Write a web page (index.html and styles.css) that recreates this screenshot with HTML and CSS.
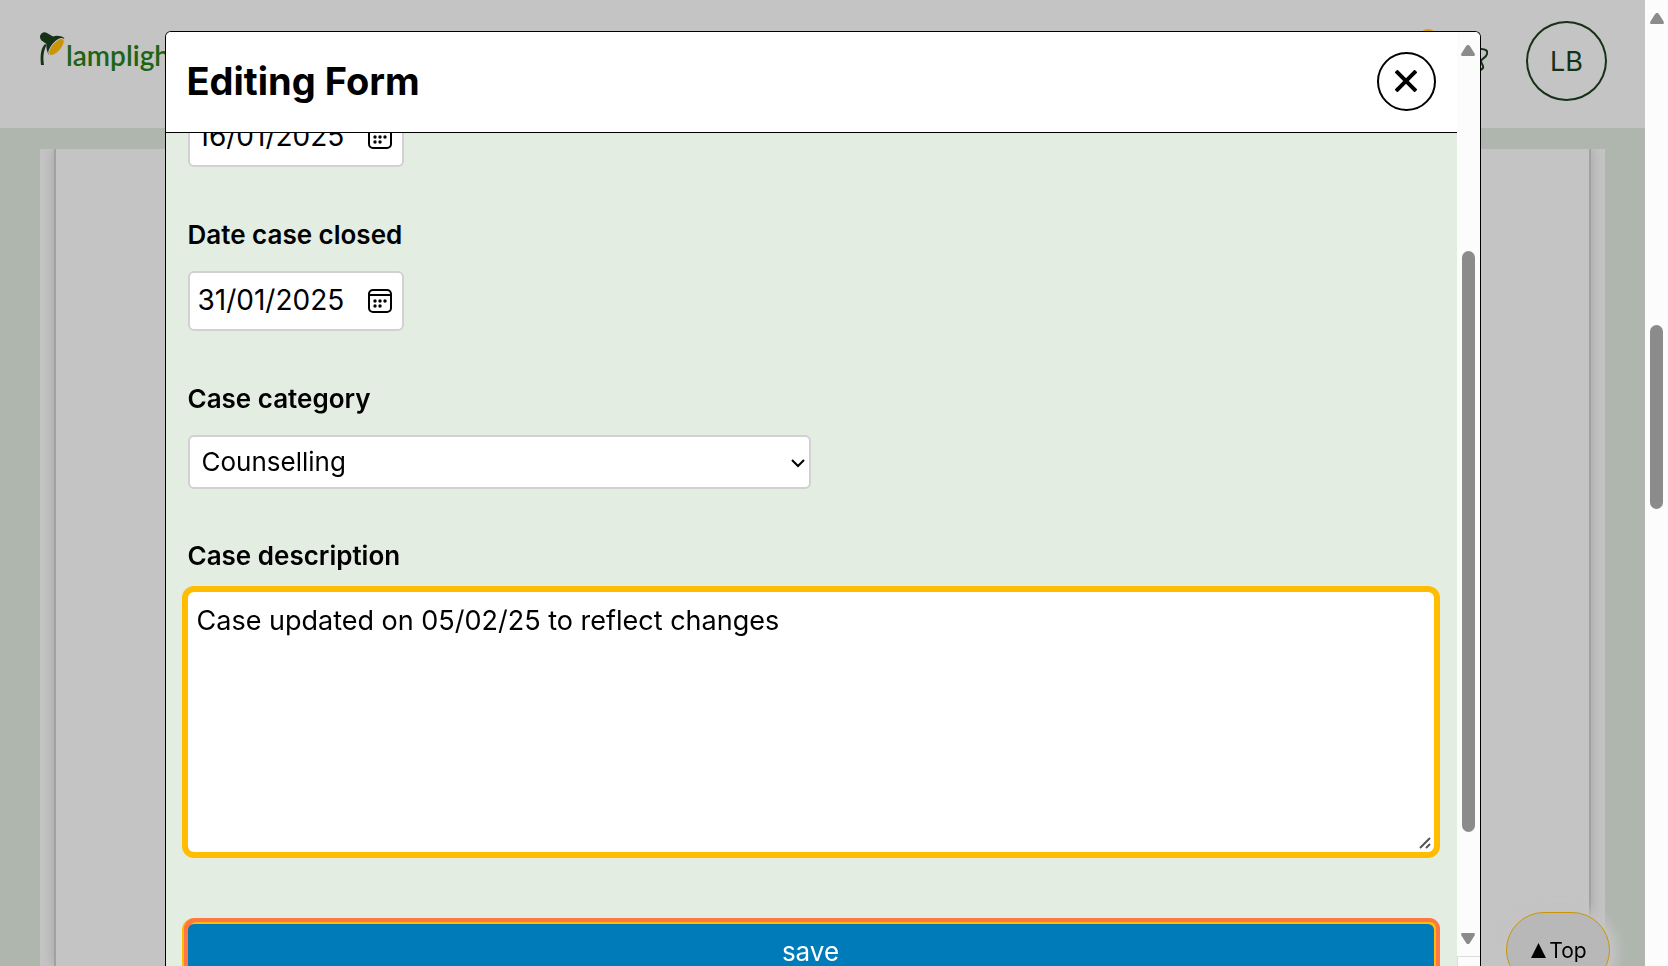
FILE: index.html
```html
<!DOCTYPE html>
<html lang="en-GB">
<head>
<meta charset="utf-8">
<title>Editing Form</title>
<link rel="stylesheet" href="styles.css">
</head>
<body>
<div class="page">
  <div class="site">
    <header class="site-header">
      <a class="logo" href="#">
        <svg class="logo-lamp" viewBox="0 0 25 34" aria-hidden="true">
          <path d="M1 33C0 23 1 16 5 12L6.500 13C3 20 3 26 4 33Z" fill="#163116"/>
          <path d="M0 4C1 1 4-1 7 1L13 4.500C17 3 21 4 24.500 6L9 23C7 20 6 16 6.500 12L1.500 8.500C0 7 0 5 0 4Z" fill="#163116"/>
          <ellipse cx="16.500" cy="15" rx="10.500" ry="4.600" transform="rotate(-49 16.500 15)" fill="#c99405" stroke="#c4c4c4"/>
        </svg>
        <span class="logo-name">lamplighter</span>
      </a>
      <nav class="site-tools">
        <button class="tool" type="button" aria-label="Notifications">
          <svg viewBox="0 0 28 28" aria-hidden="true"><path d="M5 21V12a9 9 0 0 1 18 0v9H3h22" /></svg>
          <span class="badge"></span>
        </button>
        <button class="tool" type="button" aria-label="Help">
          <svg viewBox="0 0 28 28" aria-hidden="true"><path d="M12 2h9c5 0 7 2 6 5-1 4-5 4-6 7 0 3 3 4 2 7-1 2-3 2-5 2"/></svg>
        </button>
        <button class="avatar" type="button">LB</button>
      </nav>
    </header>
    <main class="site-main">
      <div class="panel"><div class="panel-inner"></div></div>
    </main>
  </div>
  <div class="scrollbar page-scroll" aria-hidden="true">
    <svg class="arrow" viewBox="0 0 14 11"><path d="M7 0C8 0 8.500.6 9 1.300L13.600 8.600C14.300 10 13.700 11 12.500 11H1.500C.3 11-.3 10 .4 8.600L5 1.300C5.500.6 6 0 7 0Z"/></svg>
    <div class="thumb"></div>
  </div>
</div>
<a class="top-link" href="#"><svg viewBox="0 0 14 14" aria-hidden="true"><path d="M7 0 14 14H0Z"/></svg>Top</a>

<div class="overlay">
  <section class="modal" role="dialog" aria-labelledby="modal-title">
    <div class="modal-main">
      <header class="modal-header">
        <h1 class="modal-title" id="modal-title">Editing Form</h1>
        <button class="close" type="button" aria-label="Close">
          <svg viewBox="0 0 22 22" aria-hidden="true"><path d="M1 1 21 21M21 1 1 21"/></svg>
        </button>
      </header>
      <form class="form">
        <div class="date-box">
          <input class="date-input" type="text" value="16/01/2025" aria-label="Date case opened">
          <button class="calendar" type="button" aria-label="Choose date">
            <svg viewBox="0 0 24 24" aria-hidden="true"><rect x="1" y="1" width="22" height="22" rx="4"/><path d="M1 6h22"/><g class="dots"><circle cx="7" cy="12" r="1.700"/><circle cx="12" cy="12" r="1.700"/><circle cx="17" cy="12" r="1.700"/><circle cx="7" cy="17" r="1.700"/><circle cx="12" cy="17" r="1.700"/></g></svg>
          </button>
        </div>
        <label class="label" for="closed">Date case closed</label>
        <div class="date-box">
          <input class="date-input" id="closed" type="text" value="31/01/2025">
          <button class="calendar" type="button" aria-label="Choose date">
            <svg viewBox="0 0 24 24" aria-hidden="true"><rect x="1" y="1" width="22" height="22" rx="4"/><path d="M1 6h22"/><g class="dots"><circle cx="7" cy="12" r="1.700"/><circle cx="12" cy="12" r="1.700"/><circle cx="17" cy="12" r="1.700"/><circle cx="7" cy="17" r="1.700"/><circle cx="12" cy="17" r="1.700"/></g></svg>
          </button>
        </div>
        <label class="label" for="category">Case category</label>
        <div class="select-box">
          <select class="select" id="category"><option>Counselling</option></select>
          <svg class="chevron" viewBox="0 0 14 9" aria-hidden="true"><path d="M1 1 7 7 13 1"/></svg>
        </div>
        <label class="label label-text" for="description">Case description</label>
        <div class="text-box">
          <textarea class="textarea" id="description">Case updated on 05/02/25 to reflect changes</textarea>
          <svg class="grip" viewBox="0 0 12 12" aria-hidden="true"><path d="M1 11 11 1M7 11 11 7"/></svg>
        </div>
        <button class="save" type="submit">save</button>
      </form>
    </div>
    <div class="scrollbar modal-scroll" aria-hidden="true">
      <svg class="arrow" viewBox="0 0 14 11"><path d="M7 0C8 0 8.500.6 9 1.300L13.600 8.600C14.300 10 13.700 11 12.500 11H1.500C.3 11-.3 10 .4 8.600L5 1.300C5.500.6 6 0 7 0Z"/></svg>
      <div class="track"><div class="thumb"></div></div>
      <svg class="arrow arrow-down" viewBox="0 0 14 11"><path d="M7 0C8 0 8.500.6 9 1.300L13.600 8.600C14.300 10 13.700 11 12.500 11H1.500C.3 11-.3 10 .4 8.600L5 1.300C5.500.6 6 0 7 0Z"/></svg>
      <div class="corner"></div>
    </div>
  </section>
</div>
</body>
</html>
```
FILE: styles.css
```css
* { box-sizing: border-box; }
body {
  margin: 0;
  height: 100vh;
  overflow: hidden;
  font-family: Inter, "Liberation Sans", sans-serif;
  font-size: 26px;
  color: #000;
}
button, input, select, textarea { font: inherit; color: inherit; }
svg { display: block; }

.page { display: flex; height: 100vh; }
.site { flex: 1; display: flex; flex-direction: column; background: #afb6ae; }
.site-header {
  height: 128px;
  padding: 0 38px 0 40px;
  display: flex;
  justify-content: space-between;
  align-items: flex-start;
  background: #c4c4c4;
}
.logo { display: flex; padding-top: 32px; gap: 1px; text-decoration: none; color: #206413; }
.logo-lamp { width: 25px; height: 34px; }
.logo-name { font: 600 28px/46px Lato, sans-serif; }
.site-tools { display: flex; align-items: center; gap: 38px; padding-top: 21px; color: #163116; }
.tool { position: relative; border: 0; padding: 0; background: none; }
.tool svg { width: 28px; height: 28px; fill: none; stroke: #163116; stroke-width: 2; }
.badge { position: absolute; top: -18px; right: -16px; width: 20px; height: 20px; border-radius: 50%; background: #d89c06; }
.avatar {
  width: 81px;
  height: 80px;
  padding: 0;
  border: 2px solid #163116;
  border-radius: 50%;
  background: none;
  font-size: 27px;
}
.site-main { flex: 1; padding: 21px 40px 0; display: flex; }
.panel { flex: 1; padding: 0 14px; background: #c4c4c4; display: flex; overflow: hidden; }
.panel-inner { flex: 1; border: solid #a1a1a1; border-width: 0 2px; box-shadow: 0 0 12px #a1a1a1; background: #c4c4c4; }

.scrollbar { width: 23px; display: flex; flex-direction: column; align-items: center; background: #fcfcfc; }
.thumb { width: 13px; border-radius: 7px; background: #8b8b8b; }
.arrow { width: 14px; height: 11px; fill: #8b8b8b; }
.arrow-down { transform: rotate(180deg); }
.page-scroll { padding-top: 13px; }
.page-scroll .thumb { height: 19vh; margin-top: 301px; }

.top-link {
  position: fixed;
  right: 58px;
  bottom: -22px;
  width: 104px;
  height: 76px;
  border: 1px solid #c99405;
  border-radius: 38px;
  display: flex;
  align-items: center;
  justify-content: center;
  gap: 3px;
  padding-left: 2px;
  font-size: 21px;
  color: #000;
  text-decoration: none;
  background: #b8b8b8;
  box-shadow: 2px 2px 12px 6px #c4c4c4;
}
.top-link svg { width: 15px; height: 15px; }

.overlay { position: fixed; inset: 31px 23px 0 0; display: flex; justify-content: center; }
.modal {
  width: 80%;
  display: flex;
  border: 1px solid #000;
  border-bottom: 0;
  border-radius: 6px 6px 0 0;
  background: #e3ede2;
  overflow: hidden;
}
.modal-main { flex: 1; min-width: 0; }
.modal-header {
  position: relative;
  z-index: 1;
  height: 101px;
  padding: 0 21px 2px;
  display: flex;
  align-items: center;
  justify-content: space-between;
  background: #fff;
  border-bottom: 1px solid #000;
}
.modal-title { margin: 0; font-size: 38px; font-weight: 700; }
.close { width: 59px; height: 59px; padding: 0; border: 2px solid #000; border-radius: 50%; background: #fff; display: grid; place-items: center; }
.close svg { width: 22px; height: 22px; stroke: #000; stroke-width: 4; }

.form { margin-top: -26px; padding: 0 23px 0 22px; display: flex; flex-direction: column; align-items: flex-start; }
.date-box {
  display: flex;
  align-items: center;
  justify-content: space-between;
  width: 216px;
  height: 60px;
  padding: 0 10px 0 8px;
  border: 2px solid #d2d0d2;
  border-radius: 6px;
  background: #fff;
}
.date-input { width: 160px; padding: 0 0 3px; border: 0; background: none; font-size: 28px; }
.calendar { padding: 0; border: 0; background: none; }
.calendar svg { width: 24px; height: 24px; fill: none; stroke: #000; stroke-width: 2; }
.calendar .dots { fill: #000; stroke: none; }
.label { margin: 48px 0 16px; font-weight: 600; line-height: 40px; }
.label-text { margin: 47px 0 16px; }
.select-box { position: relative; width: 50%; }
.select {
  appearance: none;
  width: 100%;
  height: 54px;
  padding: 0 12px 2px;
  border: 2px solid #d2d0d2;
  border-radius: 6px;
  background: #fff;
}
.chevron { position: absolute; right: 6px; top: 24px; width: 14px; height: 9px; fill: none; stroke: #000; stroke-width: 2; }
.text-box { position: relative; width: 100%; }
.textarea {
  display: block;
  width: 100%;
  height: 260px;
  padding: 9px;
  border: 0;
  border-radius: 6px;
  font-size: 27px;
  line-height: 40px;
  background: #fff;
  box-shadow: 0 0 0 6px #ffbc00;
  resize: none;
  outline: 0;
}
.grip { position: absolute; right: 3px; bottom: 3px; width: 12px; height: 12px; fill: none; stroke: #555; stroke-width: 2; }
.save {
  width: 100%;
  height: 56px;
  line-height: 28px;
  margin-top: 72px;
  padding: 0;
  border: 0;
  border-radius: 6px;
  color: #fff;
  background: #007bba;
  box-shadow: 2px -2px 0 0 #ffbc00, 1px -1px 0 5px #ff7745, 0 0 0 6px #ffbc00;
}
.modal-scroll { padding-top: 13px; }
.track { flex: 1; padding-top: 195px; }
.track .thumb { height: 581px; }
.corner { width: 100%; height: 10px; margin-top: 12px; border: solid #dcdcdc; border-width: 1px 0 0 1px; }
```
